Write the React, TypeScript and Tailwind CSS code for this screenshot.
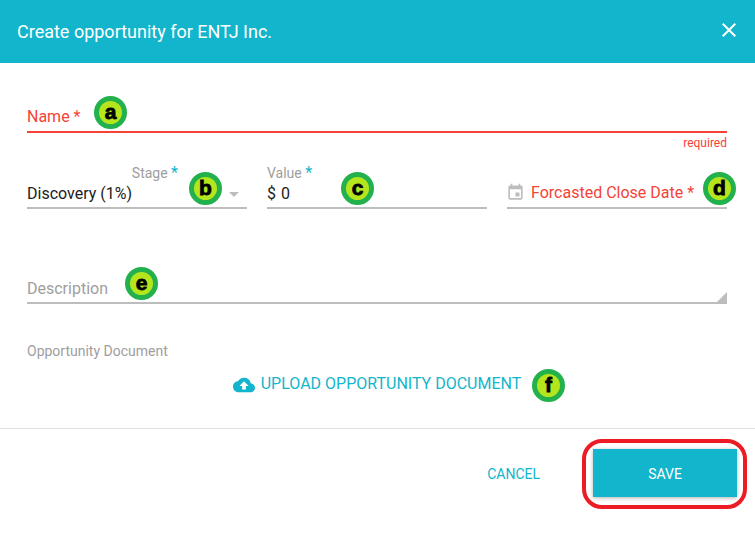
import React from "react";
import { MdClose, MdCloudUpload, MdEvent, MdArrowDropDown } from "react-icons/md";

function Badge({ letter, className }: { letter: string; className: string }) {
  return (
    <div
      className={`absolute flex h-[33px] w-[33px] items-center justify-center rounded-full border-[5px] border-[#22b14c] bg-[#b5e61d] font-['Liberation_Sans',sans-serif] text-[21px] font-bold leading-none text-black ${className}`}
    >
      <span className="-mt-[3px] [-webkit-text-stroke:0.8px_black]">{letter}</span>
    </div>
  );
}

export default function App() {
  return (
    <div className="relative h-[537px] w-[755px] overflow-hidden bg-white font-['Roboto',sans-serif]">
      <header className="flex h-[63px] items-center justify-between bg-[#12b5cb] pl-[17px] pr-[14px] text-white">
        <h1 className="text-[18px] font-normal leading-none">Create opportunity for ENTJ Inc.</h1>
        <MdClose size={24} className="-mt-[3px]" />
      </header>

      <main className="pl-[27px] pr-[28px]">
        <div className="flex h-[70px] items-end border-b-2 border-[#f44336] pb-[6px] text-[16px] leading-none text-[#f44336]">
          Name&nbsp;*
        </div>
        <p className="mt-[3px] h-[14px] text-right text-[12px] leading-[14px] text-[#f44336]">required</p>

        <div className="mt-[6px] grid grid-cols-3 gap-x-[20px]">
          <div className="h-[53px] border-b-2 border-[#bdbdbd]">
            <div className="flex h-[22px] items-center justify-end pr-[69px] pt-[12px] text-[14px] leading-none text-[#9e9e9e]">
              Stage&nbsp;<span className="text-[16px] text-[#12b5cb]">*</span>
            </div>
            <div className="mt-[5px] flex h-[22px] items-center justify-between text-[16px] leading-none text-[#212121]">
              Discovery (1%)
              <MdArrowDropDown size={24} className="mr-[1px] text-[#bdbdbd]" />
            </div>
          </div>
          <div className="h-[53px] border-b-2 border-[#bdbdbd]">
            <div className="flex h-[22px] items-center pt-[12px] text-[14px] leading-none text-[#9e9e9e]">
              Value&nbsp;<span className="text-[16px] text-[#12b5cb]">*</span>
            </div>
            <div className="mt-[5px] flex h-[22px] items-center text-[16px] leading-none text-[#212121] [word-spacing:1px]">$ 0</div>
          </div>
          <div className="flex h-[53px] items-end border-b-2 border-[#bdbdbd] pb-[5px]">
            <MdEvent size={19} className="-ml-[1px] text-[#bdbdbd]" />
            <span className="mb-[1px] ml-[6px] text-[16px] leading-none text-[#f44336]">Forcasted Close Date *</span>
          </div>
        </div>

        <div className="relative mt-[65px] flex h-[30px] items-center border-b-2 border-[#bdbdbd] pt-[2px] text-[16px] leading-none text-[#9e9e9e]">
          Description
          <div className="absolute bottom-0 right-0 h-0 w-0 border-b-[10px] border-l-[10px] border-b-[#bdbdbd] border-l-transparent" />
        </div>

        <p className="mt-[39px] text-[14px] leading-[16px] text-[#9e9e9e]">Opportunity Document</p>

        <div className="mt-[13px] flex h-[24px] items-center justify-center text-[#12b5cb]">
          <MdCloudUpload size={22} className="mr-[6px] mt-[2px]" />
          <span className="text-[16px] leading-none">UPLOAD OPPORTUNITY DOCUMENT</span>
        </div>
      </main>

      <footer className="mt-[32px] flex h-[109px] items-start justify-end border-t border-[#e0e0e0] pr-[18px] pt-[20px]">
        <button className="mr-[53px] flex h-[48px] items-center pt-[2px] text-[14px] leading-none text-[#12b5cb]">CANCEL</button>
        <button className="h-[48px] w-[144px] bg-[#12b5cb] pt-[2px] text-[14px] leading-none text-white shadow-[0_1px_4px_rgba(0,0,0,0.3)]">
          SAVE
        </button>
      </footer>

      <Badge letter="a" className="left-[94px] top-[96px]" />
      <Badge letter="b" className="left-[189px] top-[172px]" />
      <Badge letter="c" className="left-[341px] top-[172px]" />
      <Badge letter="d" className="left-[703px] top-[172px]" />
      <Badge letter="e" className="left-[125px] top-[267px]" />
      <Badge letter="f" className="left-[532px] top-[369px]" />
      <div className="absolute left-[582px] top-[439px] h-[70px] w-[165px] rounded-[20px] border-[4px] border-[#ed1c24]" />
    </div>
  );
}
